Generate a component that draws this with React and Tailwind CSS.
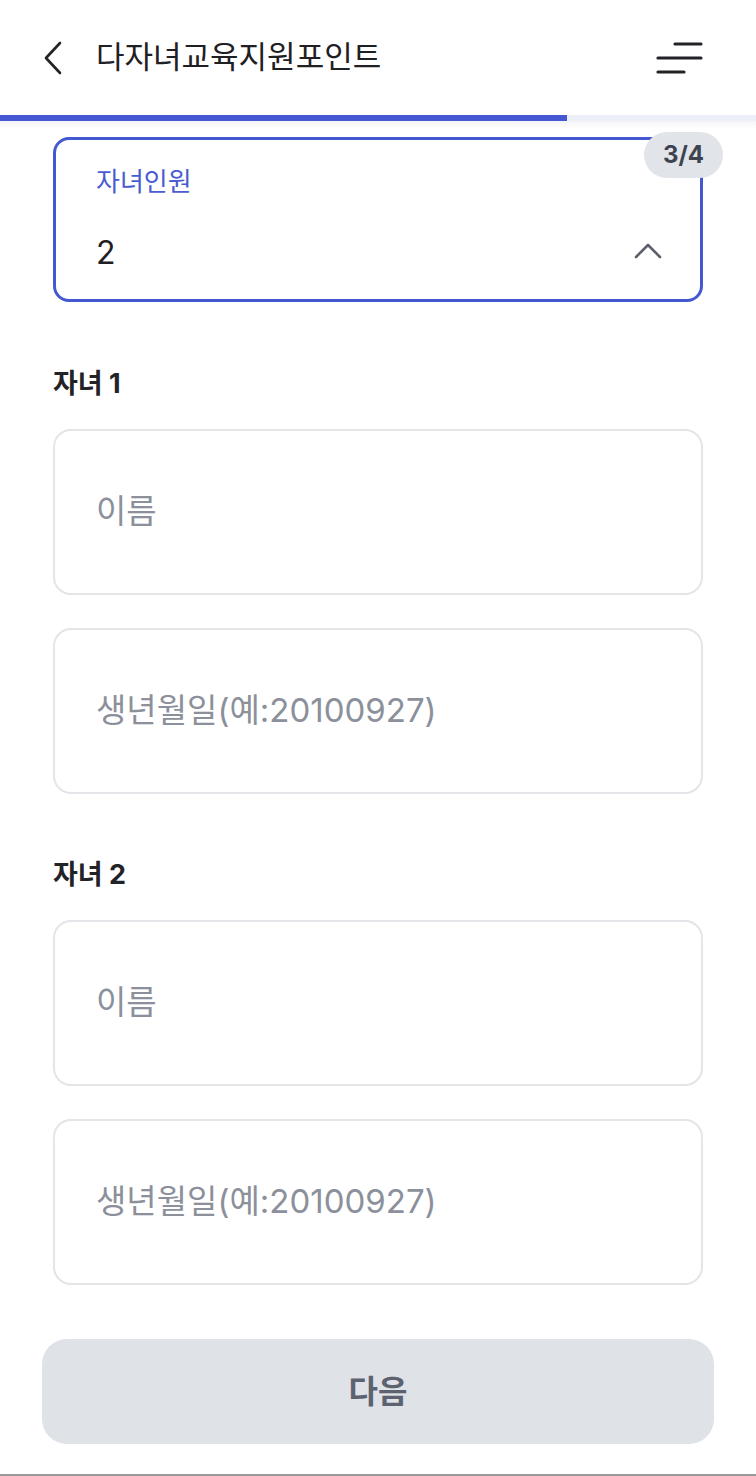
import React from "react";

const FONT = { fontFamily: 'Inter, "Noto Sans CJK KR", sans-serif' };

function BackIcon() {
  return (
    <svg width="22" height="34" viewBox="0 0 22 34" fill="none">
      <path d="M18 2 L4 17 L18 32" stroke="#222327" strokeWidth="2.6" strokeLinecap="round" strokeLinejoin="round" />
    </svg>
  );
}

function MenuIcon() {
  return (
    <svg width="50" height="36" viewBox="0 0 50 36" fill="none">
      <path d="M19 4 H45" stroke="#222327" strokeWidth="3.2" strokeLinecap="round" />
      <path d="M2 18 H45" stroke="#222327" strokeWidth="3.2" strokeLinecap="round" />
      <path d="M2 32 H28" stroke="#222327" strokeWidth="3.2" strokeLinecap="round" />
    </svg>
  );
}

function ChevronUp() {
  return (
    <svg width="28" height="18" viewBox="0 0 28 18" fill="none">
      <path d="M2 15 L14 3 L26 15" stroke="#5b606b" strokeWidth="2.6" strokeLinecap="round" strokeLinejoin="round" />
    </svg>
  );
}

function Field({ placeholder }) {
  return (
    <div className="h-[166px] border-2 border-[#e3e5e9] rounded-[18px] px-[41px] flex items-center text-[33px] text-[#8b909a]">
      {placeholder}
    </div>
  );
}

function Child({ n, first }) {
  return (
    <div className="flex flex-col">
      <div className={`${first ? "mt-[64px]" : "mt-[63px]"} h-[36px] leading-[36px] text-[27px] font-bold text-[#222327]`}>
        자녀 {n}
      </div>
      <div className="mt-[27px] flex flex-col gap-[33px]">
        <Field placeholder="이름" />
        <Field placeholder="생년월일(예:20100927)" />
      </div>
    </div>
  );
}

export default function App() {
  return (
    <div style={FONT} className="w-[756px] h-[1476px] bg-white flex flex-col overflow-hidden">
      <header className="h-[115px] flex items-center shrink-0">
        <div className="pl-[42px] w-[96px] flex items-center">
          <BackIcon />
        </div>
        <div className="text-[31px] text-[#1f2024]">다자녀교육지원포인트</div>
        <div className="ml-auto mr-[50px] flex items-center">
          <MenuIcon />
        </div>
      </header>
      <div className="h-[6px] bg-[#eceffa] shrink-0">
        <div className="h-full w-3/4 bg-[#4458d2]" />
      </div>
      <div className="h-[8px] bg-gradient-to-b from-[#f3f4f6] to-white shrink-0" />

      <main className="px-[53px] flex flex-col">
        <div className="relative mt-[8px] h-[165px] border-[3px] border-[#4458d2] rounded-[16px] px-[40px] flex flex-col">
          <div className="mt-[25px] text-[26px] leading-[34px] text-[#4a5cd0]">자녀인원</div>
          <div className="mt-[36px] flex items-center justify-between">
            <span className="text-[32px] leading-[36px] text-[#1f2024]">2</span>
            <span className="mr-[-2px] mt-[-4px]">
              <ChevronUp />
            </span>
          </div>
          <div className="absolute top-[-8px] right-[-23px] w-[79px] h-[46px] rounded-full bg-[#e1e4e9] flex items-center justify-center text-[24px] font-bold text-[#3d4350]">
            3/4
          </div>
        </div>

        <Child n={1} first />
        <Child n={2} />
      </main>

      <div className="px-[42px] mt-[54px]">
        <button className="w-full h-[105px] rounded-[25px] bg-[#dfe2e7] flex items-center justify-center text-[32px] font-semibold text-[#5d6270]">
          다음
        </button>
      </div>
      <div className="mt-auto h-[2px] bg-[#9a9a9a]" />
    </div>
  );
}
